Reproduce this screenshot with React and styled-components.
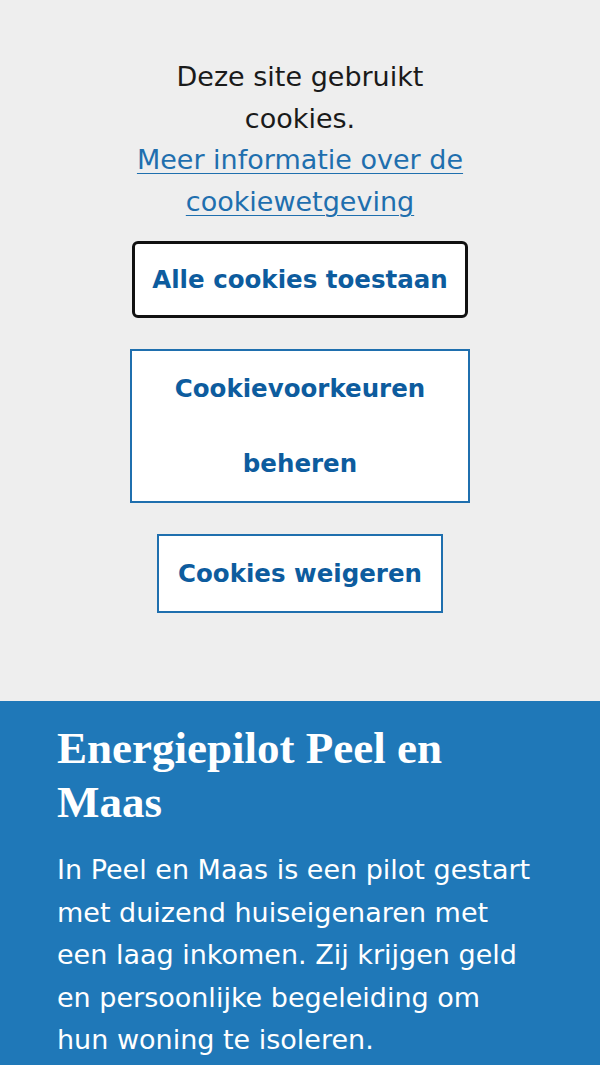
import styled, { createGlobalStyle } from "styled-components";

const Global = createGlobalStyle`
  body {
    margin: 0;
    background: #eeeeee;
    font-family: "DejaVu Sans", "Noto Sans", sans-serif;
  }
`

const Banner = styled.section`
  background: #eeeeee;
  display: flex;
  flex-direction: column;
  align-items: center;
  padding: 56px 0 88px;
`

const Message = styled.p`
  margin: 0;
  width: 340px;
  text-align: center;
  font-size: 27px;
  line-height: 41.5px;
  color: #1a1a1a;
`

const InfoLink = styled.a`
  display: block;
  color: #1f6fae;
  text-decoration: underline;
  text-underline-offset: 4px;
  text-decoration-thickness: 1px;
`

const Buttons = styled.div`
  margin-top: 19px;
  display: flex;
  flex-direction: column;
  align-items: center;
  gap: 31px;
`

const Button = styled.button`
  box-sizing: border-box;
  background: #ffffff;
  color: #0d5c9e;
  font-family: inherit;
  font-size: 24.5px;
  font-weight: 700;
  line-height: ${p => (p.$focused ? "71px" : "75px")};
  max-width: 340px;
  padding: 0 ${p => (p.$focused ? "17px" : "19px")};
  border: ${p => (p.$focused ? "3px solid #111" : "2px solid #1f6fae")};
  border-radius: ${p => (p.$focused ? "6px" : "0")};
  cursor: pointer;
`

const Article = styled.section`
  background: #1f78b8;
  color: #ffffff;
  padding: 20px 57px 20px;
`

const Title = styled.h2`
  margin: 0 0 20px;
  max-width: 420px;
  font-family: "Liberation Serif", "DejaVu Serif", serif;
  font-weight: 700;
  font-size: 45px;
  line-height: 54px;
`

const Body = styled.p`
  margin: 0;
  max-width: 478px;
  font-size: 27px;
  line-height: 42.5px;
`

export default function App() {
  return (
    <>
      <Global />
      <Banner>
        <Message>
          Deze site gebruikt cookies.
          <InfoLink href="#">Meer informatie over de cookiewetgeving</InfoLink>
        </Message>
        <Buttons>
          <Button $focused>Alle cookies toestaan</Button>
          <Button>Cookievoorkeuren beheren</Button>
          <Button>Cookies weigeren</Button>
        </Buttons>
      </Banner>
      <Article>
        <Title>Energiepilot Peel en Maas</Title>
        <Body>
          In Peel en Maas is een pilot gestart met duizend huiseigenaren met
          een laag inkomen. Zij krijgen geld en persoonlijke begeleiding om
          hun woning te isoleren.
        </Body>
      </Article>
    </>
  )
}
